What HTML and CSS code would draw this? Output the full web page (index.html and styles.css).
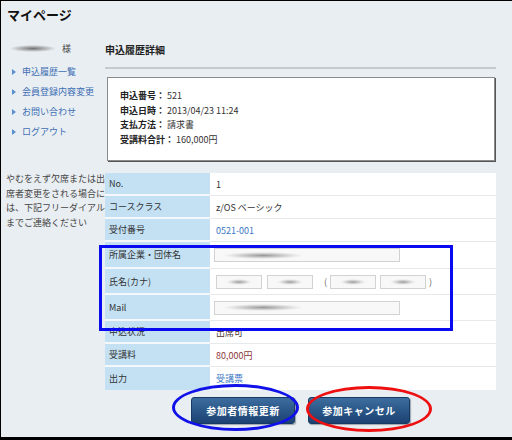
FILE: index.html
```html
<!DOCTYPE html>
<html lang="ja">
<head>
<meta charset="utf-8">
<title>マイページ</title>
<link rel="stylesheet" href="styles.css">
</head>
<body>
<div class="frame">
  <header class="page-head"><h1>マイページ</h1></header>
  <div class="layout">
    <aside class="side">
      <div class="user"><span class="blur-name"></span><span class="sama">様</span></div>
      <ul class="nav">
        <li><span class="tri"></span>申込履歴一覧</li>
        <li><span class="tri"></span>会員登録内容変更</li>
        <li><span class="tri"></span>お問い合わせ</li>
        <li><span class="tri"></span>ログアウト</li>
      </ul>
      <p class="note">やむをえず欠席または出<br>席者変更をされる場合に<br>は、下記フリーダイアル<br>までご連絡ください</p>
    </aside>
    <main class="main">
      <h2 class="sec-title">申込履歴詳細</h2>
      <div class="summary">
        <p><b>申込番号：</b> 521</p>
        <p><b>申込日時：</b> 2013/04/23 11:24</p>
        <p><b>支払方法：</b> 請求書</p>
        <p><b>受講料合計：</b> 160,000円</p>
      </div>
      <div class="detail">
        <div class="row"><div class="k">No.</div><div class="v">1</div></div>
        <div class="row"><div class="k">コースクラス</div><div class="v">z/OS ベーシック</div></div>
        <div class="row"><div class="k">受付番号</div><div class="v link">0521-001</div></div>
        <div class="row tall1"><div class="k">所属企業・団体名</div><div class="v"><span class="field wide"></span></div></div>
        <div class="row tall"><div class="k">氏名(カナ)</div><div class="v names"><span class="field short f1"></span><span class="field short f2"></span><span class="paren open">(</span><span class="field short f3"></span><span class="field short f4"></span><span class="paren close">)</span></div></div>
        <div class="row tall"><div class="k">Mail</div><div class="v"><span class="field wide"></span></div></div>
        <div class="row"><div class="k">申込状況</div><div class="v status">出席可</div></div>
        <div class="row"><div class="k">受講料</div><div class="v price">80,000円</div></div>
        <div class="row last"><div class="k">出力</div><div class="v link">受講票</div></div>
        <div class="mark-rect"></div>
      </div>
      <div class="actions">
        <div class="btn-wrap"><button class="btn">参加者情報更新</button><span class="ring ring-blue"></span></div>
        <div class="btn-wrap"><button class="btn btn-cancel">参加キャンセル</button><span class="ring ring-red"></span></div>
      </div>
    </main>
  </div>
</div>
</body>
</html>
```
FILE: styles.css
```css
* { box-sizing: border-box; margin: 0; padding: 0; }
body {
  width: 512px;
  height: 440px;
  overflow: hidden;
  font-family: "Noto Sans CJK JP", "Noto Sans", sans-serif;
  font-size: 9px;
  color: #333;
  background: #e9eef2;
}
.frame {
  width: 512px;
  height: 440px;
  background: #e9eef2;
  border-top: 1px solid #000;
  border-left: 1px solid #000;
  border-bottom: 3px solid #000;
  display: flex;
  flex-direction: column;
}
.page-head { height: 28px; padding-left: 6px; }
.page-head h1 { font-size: 13px; line-height: 28px; font-weight: bold; color: #111; }
.layout { display: flex; flex: 1; }
.side { width: 104px; flex: none; }
.main { width: 391px; flex: none; }

.user { display: flex; align-items: center; height: 14px; margin-top: 12px; padding-left: 9px; }
.blur-name {
  width: 46px; height: 7px;
  background: radial-gradient(closest-side, rgba(100,100,100,.9), rgba(130,130,130,.35) 70%, rgba(150,150,150,0));
}
.sama { margin-left: 6px; color: #444; font-size: 9px; }

.nav { list-style: none; margin-top: 7px; }
.nav li { height: 20px; line-height: 20px; padding-left: 11px; color: #3d6fb4; display: flex; align-items: center; }
.tri {
  width: 0; height: 0;
  border-top: 3px solid transparent;
  border-bottom: 3px solid transparent;
  border-left: 4px solid #5b90cf;
  margin-right: 6px;
}
.note { margin-top: 30px; padding-left: 5px; line-height: 14.5px; color: #444; white-space: nowrap; }

.sec-title {
  margin-top: 13px;
  font-size: 10px;
  line-height: 16px;
  font-weight: bold;
  color: #222;
  padding-bottom: 9px;
  border-bottom: 2px solid #c6cacf;
}
.summary {
  margin: 8px 1px 0 2px;
  background: #fff;
  border: 1px solid #8a8a8a;
  box-shadow: 1px 1px 0 #555;
  padding: 11px 12px 13px;
  line-height: 14.6px;
  color: #333;
}
.summary b { font-weight: bold; color: #222; }

.detail { position: relative; margin-top: 12px; }
.row { display: grid; grid-template-columns: 105px 1fr; height: 23px; }
.row.tall1 { height: 27px; }
.row.tall { height: 26px; }
.k {
  background: #c3e1f3;
  border-bottom: 2px solid #f4f8fb;
  padding-left: 4px;
  display: flex; align-items: center;
  color: #333;
}
.v {
  background: #fff;
  border-bottom: 1px solid #e6e9ec;
  padding-left: 6px;
  display: flex; align-items: center;
  color: #333;
}
.row.last .k, .row.last .v { border-bottom: none; }
.v.link { color: #3a78c4; }
.v.status { color: #4a3434; }
.v.price { color: #8c3a3a; }

.field {
  display: block;
  height: 14px;
  border: 1px solid #d2d2d2;
  background-color: #f8f8f8;
  background-repeat: no-repeat;
}
.field.wide {
  width: 186px;
  margin-left: -2px;
  background-image: radial-gradient(closest-side, rgba(120,120,120,.75), rgba(150,150,150,.2) 75%, rgba(160,160,160,0));
  background-size: 80px 7px;
  background-position: 8px center;
}
.field.short {
  width: 46px;
  background-image: radial-gradient(closest-side, rgba(120,120,120,.7), rgba(150,150,150,.15) 75%, rgba(160,160,160,0));
  background-size: 26px 6px;
  background-position: center center;
}
.field.f2 { margin-left: 5px; }
.field.f4 { margin-left: 4px; }
.paren { color: #666; }
.paren.open { margin: 0 3px 0 11px; }
.paren.close { margin-left: 3px; }

.mark-rect {
  position: absolute;
  left: -6px;
  top: 72px;
  width: 354px;
  height: 86px;
  border: 3px solid #0a0af0;
  pointer-events: none;
}

.actions { display: flex; justify-content: center; gap: 13px; margin-top: 7px; }
.btn-wrap { position: relative; }
.btn {
  display: block;
  width: 104px;
  height: 27px;
  border: 1px solid #163a63;
  border-radius: 3px;
  background: linear-gradient(#3d6d9f, #2a5788 50%, #1c4272);
  box-shadow: 1px 1px 1px rgba(80,90,100,.5);
  color: #fff;
  font-family: "Noto Sans CJK JP", "Noto Sans", sans-serif;
  font-size: 10px;
  font-weight: bold;
  letter-spacing: 0.5px;
}
.btn-cancel { width: 102px; }
.ring { position: absolute; border-radius: 50%; pointer-events: none; }
.ring-blue { left: -19px; top: -13px; width: 127px; height: 47px; border: 3px solid #1010e8; }
.ring-red { left: -2px; top: -11px; width: 126px; height: 46px; border: 3px solid #ee1010; }
```
